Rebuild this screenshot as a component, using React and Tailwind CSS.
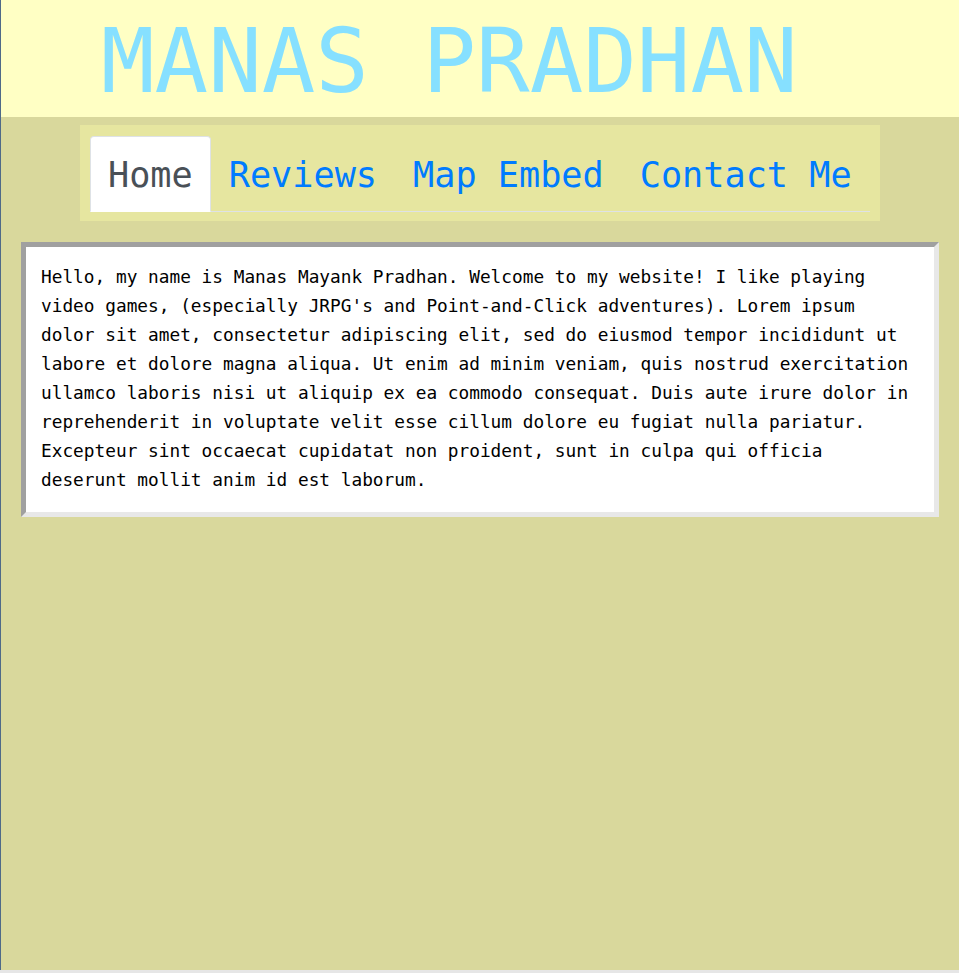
import React from 'react';

const tabs = ['Home', 'Reviews', 'Map Embed', 'Contact Me'];

const App = () => {
    return (
        <div className="h-[973px] w-[959px] bg-[#e6e6e6] overflow-hidden">
            <div className="h-[970px] border-l border-[#4f6a88] bg-[#d9d89c]">
                {/* header */}
                <header className="h-[117px] bg-[#ffffc4] pl-[100px] pt-[6px] flex items-center">
                    <h1 className="font-['DejaVu_Sans_Mono',monospace] text-[89px] leading-none text-[#86e0ff]">
                        MANAS PRADHAN
                    </h1>
                </header>

                {/* nav */}
                <nav className="mx-auto mt-2 w-[800px] bg-[#e6e6a0] px-[10px] pt-[11px] pb-[9px]">
                    <ul className="flex border-b border-[#dee2e6] font-['DejaVu_Sans_Mono',monospace] text-[35.2px] whitespace-nowrap">
                        {tabs.map((tab, index) => (
                            <li key={tab} className="-mb-px shrink-0">
                                <a
                                    href="#"
                                    className={
                                        index === 0
                                            ? 'block h-[76px] px-[17px] leading-[76px] bg-white text-[#495057] border border-[#dee2e6] border-b-white rounded-t'
                                            : 'block h-[76px] px-[17px] leading-[76px] text-[#007bff] border border-transparent'
                                    }
                                >
                                    {tab}
                                </a>
                            </li>
                        ))}
                    </ul>
                </nav>

                {/* content */}
                <main className="mx-5 mt-[21px] border-[5px] border-inset border-t-[#a0a0a0] border-l-[#a0a0a0] border-r-[#e8e8e8] border-b-[#e8e8e8] bg-white pl-[15px] pr-[22px] pt-[15px] pb-[18px]">
                    <p className="font-['DejaVu_Sans_Mono',monospace] text-[17.8px] leading-[29px] text-black">
                        Hello, my name is Manas Mayank Pradhan. Welcome to my website! I like playing video games, (especially JRPG's and Point-and-Click adventures). Lorem ipsum dolor sit amet, consectetur adipiscing elit, sed do eiusmod tempor incididunt ut labore et dolore magna aliqua. Ut enim ad minim veniam, quis nostrud exercitation ullamco laboris nisi ut aliquip ex ea commodo consequat. Duis aute irure dolor in reprehenderit in voluptate velit esse cillum dolore eu fugiat nulla pariatur. Excepteur sint occaecat cupidatat non proident, sunt in culpa qui officia deserunt mollit anim id est laborum.
                    </p>
                </main>
            </div>
        </div>
    );
};

export default App;
